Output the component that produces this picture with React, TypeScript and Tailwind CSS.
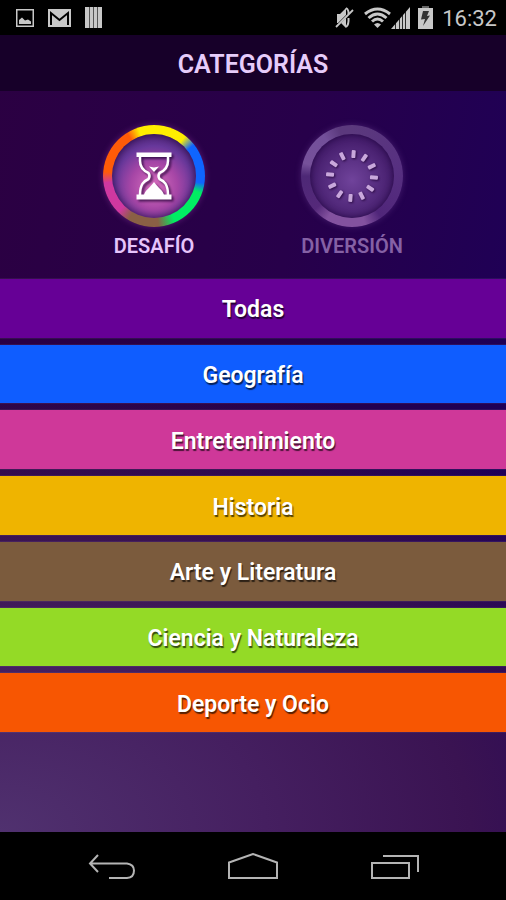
import React from "react";

const categories = [
  { name: "Todas", color: "bg-[#660096]" },
  { name: "Geografía", color: "bg-[#0f5dff]" },
  { name: "Entretenimiento", color: "bg-[#cf3899]" },
  { name: "Historia", color: "bg-[#efb400]" },
  { name: "Arte y Literatura", color: "bg-[#7b5b3d]" },
  { name: "Ciencia y Naturaleza", color: "bg-[#94da26]" },
  { name: "Deporte y Ocio", color: "bg-[#f75602]" },
];

function StatusBar() {
  return (
    <div className="flex h-[35px] shrink-0 items-center justify-between bg-black pl-4 pr-[9px] text-[#c8c8c8]">
      <div className="flex items-center gap-[14px]">
        <svg width="18" height="18" viewBox="0 0 18 18" aria-hidden="true">
          <rect x="0.75" y="0.75" width="16.5" height="16.5" fill="none" stroke="currentColor" strokeWidth="1.5" />
          <path d="M3 15V11L6 8.5L9 11.5L12 10.5L15 12.5V15Z" fill="currentColor" />
        </svg>
        <svg width="23" height="18" viewBox="0 0 23 18" aria-hidden="true">
          <rect width="23" height="18" fill="currentColor" />
          <path d="M3 16V4L11.500 11L20 4V16" fill="none" stroke="#000" strokeWidth="2" />
        </svg>
        <svg width="17" height="21" viewBox="0 0 17 21" aria-hidden="true">
          <rect width="17" height="21" fill="currentColor" />
          <path d="M4.500 0V21M8.500 0V21M12.500 0V21" stroke="#555" strokeWidth="1" />
        </svg>
      </div>
      <div className="flex items-center">
        <svg className="mr-[10px]" width="19" height="22" viewBox="0 0 19 22" aria-hidden="true">
          <path d="M2 7H5L11 1V8L3 16H2ZM6 16L11 11V21Z" fill="currentColor" />
          <path d="M11 1Q14 3 13.500 7M13.500 11Q14 18 11 20" fill="none" stroke="currentColor" strokeWidth="2" />
          <path d="M1 20L18 3" stroke="currentColor" strokeWidth="1.800" />
        </svg>
        <svg width="27" height="22" viewBox="0 0 27 22" aria-hidden="true">
          <path d="M1 7Q13.500 -3 26 7" fill="none" stroke="currentColor" strokeWidth="3" />
          <path d="M4.500 11Q13.500 3 22.500 11" fill="none" stroke="currentColor" strokeWidth="3" />
          <path d="M8 14.500Q13.500 9.500 19 14.500" fill="none" stroke="currentColor" strokeWidth="3" />
          <path d="M10 17.500Q13.500 14.500 17 17.500L13.500 21Z" fill="currentColor" />
        </svg>
        <svg className="mr-[8px]" width="19" height="22" viewBox="0 0 19 22" aria-hidden="true">
          <path d="M0 22L19 0V22Z" fill="currentColor" />
          <path d="M4.500 14V22M8.500 10V22M11.500 5V22M14.500 2V22" stroke="#000" strokeWidth="0.800" />
        </svg>
        <svg className="mr-[9px]" width="15" height="23" viewBox="0 0 15 23" aria-hidden="true">
          <rect x="4" width="7" height="3" fill="#666" />
          <rect y="2" width="15" height="21" fill="currentColor" />
          <path d="M5 5H11L9 10L12 9.500L5 20L7 13L3 13.500Z" fill="#333" />
        </svg>
        <time className="pt-[2px] text-[22px] leading-6">16:32</time>
      </div>
    </div>
  );
}

function Hourglass() {
  return (
    <svg
      className="drop-shadow-[2px_2px_1px_rgba(30,0,50,0.7)]"
      width="36"
      height="48"
      viewBox="0 0 36 48"
      aria-hidden="true"
    >
      <path d="M0.500 0.500H35.500V5H0.500ZM0.500 42.500H35.500V47.500H0.500Z" fill="#fff" />
      <path
        d="M4 4V9C4 16 8 19 12.500 21Q14.500 24 12.500 27C8 29 4 32 4 43M32 4V9C32 16 28 19 23.500 21Q21.500 24 23.500 27C28 29 32 32 32 43"
        fill="none"
        stroke="#fff"
        strokeWidth="2.500"
      />
      <path d="M13 14.500L18 15.500L23 14.500L18 20ZM18 20V23" fill="#fff" />
      <path d="M8 43C9 38 14 36 18 30C22 36 27 38 28 43Z" fill="#fff" />
    </svg>
  );
}

function Burst() {
  const angles = Array.from({ length: 12 }, (_, i) => 4 + i * 30);
  return (
    <svg
      className="drop-shadow-[1px_1px_1px_rgba(30,0,50,0.8)]"
      width="54"
      height="54"
      viewBox="0 0 54 54"
      aria-hidden="true"
    >
      {angles.map((a) => (
        <rect key={a} x="25" y="1" width="4" height="8" rx="1" fill="#c9a8dc" transform={`rotate(${a} 27 27)`} />
      ))}
    </svg>
  );
}

export default function App() {
  return (
    <div className="flex min-h-screen flex-col bg-black font-['Roboto',sans-serif]">
      <StatusBar />
      <main className="flex flex-1 flex-col bg-[radial-gradient(ellipse_150%_60%_at_0%_100%,#50316f_0%,#451f60_35%,#3a1352_62%,transparent_100%),linear-gradient(100deg,#2b0042_0%,#27004a_50%,#1c005a_100%)]">
        <header className="flex h-14 shrink-0 items-center justify-center bg-[#170029] pt-[3px]">
          <h1 className="text-[25px] font-semibold leading-8 text-[#e6ccfa]">CATEGORÍAS</h1>
        </header>
        <div className="flex h-[188px] shrink-0 items-start justify-center gap-[58px] pt-[34px]">
          <button
            type="button"
            aria-pressed="true"
            className="flex w-[140px] flex-col items-center gap-[7px] text-[20px] font-semibold leading-6 text-[#e6c4fb]"
          >
            <span className="block size-[102px] rounded-full bg-[conic-gradient(#ffee00_0deg_38deg,#0f65ff_52deg_98deg,#00ee63_110deg_155deg,#8a6045_175deg_210deg,#cf38a0_225deg_262deg,#ff5b08_275deg_328deg,#ffee00_342deg)] p-[9px] shadow-[0_0_6px_rgba(190,80,200,0.35)]">
              <span className="flex size-full items-center justify-center rounded-full bg-[radial-gradient(circle_at_50%_62%,#d86fbe_0%,#a646a6_35%,#67389b_60%,#381052_100%)] shadow-[inset_0_0_8px_rgba(25,0,55,0.8)]">
                <Hourglass />
              </span>
            </span>
            DESAFÍO
          </button>
          <button
            type="button"
            aria-pressed="false"
            className="flex w-[140px] flex-col items-center gap-[7px] text-[20px] font-semibold leading-6 text-[#8561a5]"
          >
            <span className="block size-[102px] rounded-full bg-[conic-gradient(#5b397d_0deg,#573081_80deg,#50267a_145deg,#83529f_165deg_210deg,#55297a_228deg,#4d2876_270deg,#76519a_285deg,#73509a_325deg,#5b397d_345deg)] p-[9px] shadow-[0_0_6px_rgba(130,80,170,0.35)]">
              <span className="flex size-full items-center justify-center rounded-full bg-[radial-gradient(circle_at_50%_55%,#70439b_0%,#532a7c_45%,#2d0750_100%)] shadow-[inset_0_0_6px_rgba(25,0,55,0.7)]">
                <Burst />
              </span>
            </span>
            DIVERSIÓN
          </button>
        </div>
        <ul className="flex flex-1 flex-col gap-[7px] pb-[100px]">
          {categories.map((c) => (
            <li key={c.name} className="flex min-h-12 flex-1">
              <button
                type="button"
                className={`${c.color} flex w-full items-center justify-center pt-[4px] text-[23px] font-semibold leading-7 text-white shadow-[0_0_1px_rgba(255,255,255,0.35)] [text-shadow:1px_2px_1px_rgba(0,0,0,0.65)]`}
              >
                {c.name}
              </button>
            </li>
          ))}
        </ul>
      </main>
      <nav className="flex h-[68px] shrink-0 items-center justify-center gap-[92px] bg-black pt-[2px] text-[#b4b4b4]">
        <button type="button" aria-label="Atrás">
          <svg width="48" height="28" viewBox="0 0 48 28" fill="none" stroke="currentColor" strokeWidth="2">
            <path d="M11 2L3 10.500L11 19M3 10.500H40Q47 11.500 47 17.500Q47 24.500 40 25H22" />
          </svg>
        </button>
        <button type="button" aria-label="Inicio">
          <svg width="52" height="28" viewBox="0 0 52 28" fill="none" stroke="currentColor" strokeWidth="2">
            <path d="M2 25V9.500L26 1L50 9.500V25Z" />
          </svg>
        </button>
        <button type="button" aria-label="Recientes">
          <svg width="48" height="28" viewBox="0 0 48 28" fill="none" stroke="currentColor" strokeWidth="2">
            <path d="M1 10H38V25H1ZM12 3H47V19" />
          </svg>
        </button>
      </nav>
    </div>
  );
}
